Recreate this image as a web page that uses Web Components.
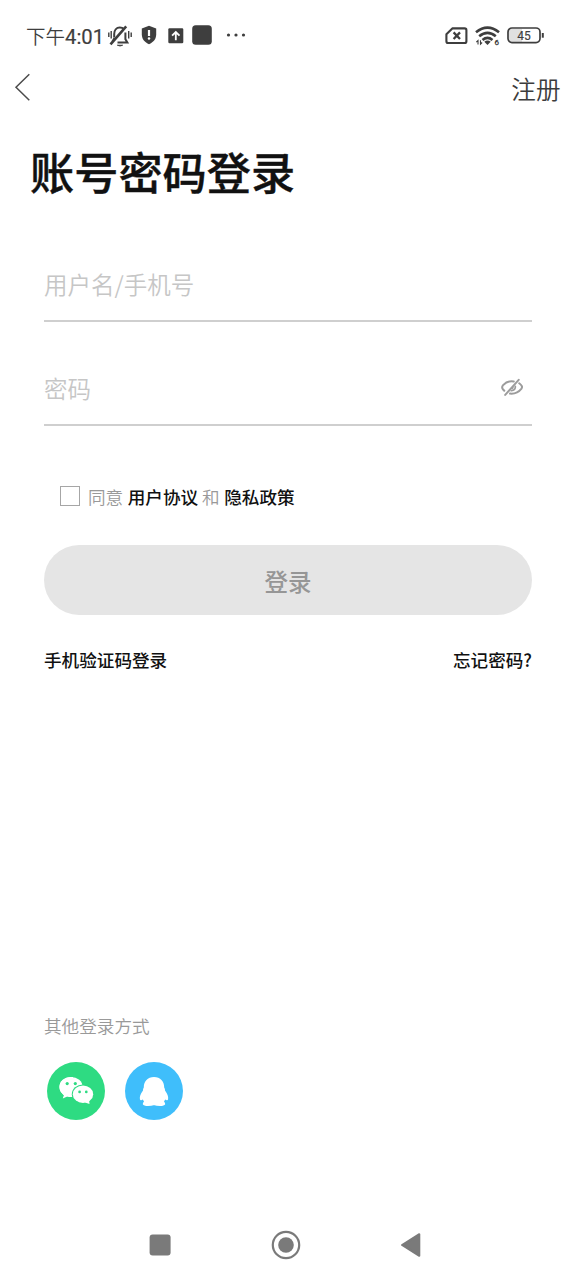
<!DOCTYPE html>
<html lang="zh-CN">
<head>
<meta charset="utf-8">
<title>账号密码登录</title>
<style>
html,body{margin:0;height:100%;background:#fff}
body{font-family:Roboto,"Noto Sans CJK SC",sans-serif}
</style>
</head>
<body>
<login-page></login-page>
<script>
const define = (name, html) => customElements.define(name, class extends HTMLElement {
  constructor() {
    super();
    const t = document.createElement('template');
    t.innerHTML = html;
    this.attachShadow({ mode: 'open' }).append(t.content.cloneNode(true));
  }
});

define('status-bar', `
<style>
:host{display:flex;box-sizing:border-box;height:70px;align-items:center;padding:0 31px 0 26px;color:#3e3e3e}
svg{display:block;flex:none}
.time{font-size:19.5px;line-height:28px;white-space:nowrap;width:81px;margin-top:4px;font-family:Roboto,"Noto Sans CJK SC",sans-serif}
.time b{font-weight:400;font-size:20.3px;-webkit-text-stroke:.2px currentColor}
.cjk{font-weight:350}
.gap{flex:1}
text{font-family:Roboto,sans-serif;font-weight:400}
</style>
<div class="time"><span class="cjk">下午</span><b>4:01</b></div>
<svg width="26" height="24" viewBox="0 0 26 24" fill="none" stroke="#3e3e3e" stroke-width="2" style="margin-top:1px">
<path d="M7.2 13.5V10C7.2 6.2 9.4 3.4 12.8 3.4C14.8 3.4 16 4 16.8 4.9M18.4 8.5V15.2L20.4 18.6H10.5"/><path d="M5.3 17.8L7.5 14"/><path d="M3.5 20.3L19.2 2.3" stroke-width="2.6"/><path d="M10.3 21.2H15.7Q13 22.9 10.3 21.2Z" fill="#3e3e3e" stroke-width=".8"/><path d="M1.8 8.5V13M4.2 7V14.5M21.7 7V14.5M24.2 8.5V13" stroke-width="1.4"/></svg>
<svg width="16" height="20" viewBox="0 0 16 20" style="margin-left:8px"><path d="M8 .8L15.2 3.4V9.3C15.2 14.3 12.1 17.5 8 19.2C3.9 17.5.8 14.3.8 9.3V3.4Z" fill="#3e3e3e"/><path d="M8 5V11" stroke="#fff" stroke-width="2.2"/><circle cx="8" cy="13.6" r="1.25" fill="#fff"/></svg>
<svg width="16" height="16" viewBox="0 0 16 16" style="margin-left:11px;margin-top:1px"><rect x=".3" y=".3" width="15" height="15" rx="1.2" fill="#3e3e3e"/><path d="M7.8 12.3V4M4.1 7.7L7.8 4L11.5 7.7" fill="none" stroke="#fff" stroke-width="1.8"/></svg>
<svg width="20" height="20" viewBox="0 0 20 20" style="margin-left:8px"><rect x=".2" y=".2" width="19.6" height="19.6" rx="3.5" fill="#3e3e3e"/></svg>
<svg width="20" height="4" viewBox="0 0 20 4" fill="#3e3e3e" style="margin-left:14px"><circle cx="2.5" cy="2" r="1.6"/><circle cx="10" cy="2" r="1.6"/><circle cx="17.5" cy="2" r="1.6"/></svg>
<span class="gap"></span>
<svg width="23" height="18" viewBox="0 0 23 18" fill="none" stroke="#3e3e3e" style="margin-top:2px"><path d="M7.3 1.4H19.6Q21.4 1.4 21.4 3.2V14.2Q21.4 16 19.6 16H3.2Q1.4 16 1.4 14.2V7.2Z" stroke-width="2.1" stroke-linejoin="round"/><path d="M8.6 5.4L15 12M15 5.4L8.6 12" stroke-width="2.3"/></svg>
<svg width="26" height="20" viewBox="0 0 26 20" fill="none" stroke="#3e3e3e" style="margin:1px 0 0 7px"><path d="M1 6.3Q12.5-3 24 6.3" stroke-width="2.6"/><path d="M4.2 10.2Q12.5 3.4 20.8 10.2M7.5 14Q12.5 9.8 17.5 14" stroke-width="2.6"/><path d="M9.3 15.8Q12.5 13.4 15.7 15.8L12.5 18.9Z" fill="#3e3e3e" stroke="none"/><path d="M3 18.6V14.6L1.3 16.2M5.5 14.2V18.2L7.1 16.5" stroke-width="1.1"/><text x="19.6" y="19" font-size="8" fill="#3e3e3e" stroke="#3e3e3e" stroke-width=".3">6</text></svg>
<svg width="38" height="18" viewBox="0 0 38 18" style="margin-left:6px;margin-top:1px"><path d="M5 2H15V15H5Q2 15 2 12V5Q2 2 5 2Z" fill="#e0e0e0"/><rect x="1" y="1" width="32" height="14.6" rx="4" fill="none" stroke="#3e3e3e" stroke-width="1.7"/><path d="M35.8 6V10.7" stroke="#3e3e3e" stroke-width="2"/><text x="17" y="12.6" text-anchor="middle" font-size="12" fill="#3e3e3e" stroke="#3e3e3e" stroke-width=".15">45</text></svg>`);

define('nav-header', `
<style>
:host{display:flex;box-sizing:border-box;height:34px;justify-content:space-between;align-items:center;padding:0 15.5px 0 14px;color:#3c3c3c}
svg{display:block}
span{font-size:24.6px;line-height:34px;font-weight:350;font-family:"Noto Sans CJK SC",sans-serif;padding-top:2px}
</style>
<svg width="18" height="28" viewBox="0 0 18 28" fill="none" stroke="#4c4c4c" stroke-width="1.5"><path d="M15.3 1.2L2 14.2L15.3 27.2"/></svg>
<span><slot></slot></span>`);

define('text-field', `
<style>
:host{display:flex;box-sizing:border-box;height:74px;align-items:center;justify-content:space-between;border-bottom:2px solid #cfcfcf;padding-right:8px;color:#c6c6c6;font:350 23.5px/34px "Noto Sans CJK SC",sans-serif}
</style>
<span><slot></slot></span><slot name="icon"></slot>`);

define('eye-off', `
<style>:host{display:block;margin-top:-1px}svg{display:block}</style>
<svg width="24" height="20" viewBox="0 0 24 20" fill="none" stroke="#9c9c9c" stroke-width="2" stroke-linecap="round"><path d="M13.8 3.4Q7.5 2.3 3.1 7.1Q1.2 9.3 3.1 11.5L4.3 12.8M19.2 5.3Q21.2 6.8 21.9 8.2Q22.3 9.3 21.5 10.6Q17 16.3 10 15.6M5.2 16.9L18.7 1.8"/><path d="M15.3 8.4Q15.7 12.4 11.3 12.7M12.8 9.7L12.2 10.2" stroke-width="1.8"/></svg>`);

define('agree-row', `
<style>
:host{display:flex;align-items:center;height:26px;padding-left:16px;color:#999;font:350 17.6px/26px "Noto Sans CJK SC",sans-serif}
i{box-sizing:border-box;width:20px;height:20px;border:1.4px solid #a6a6a6;margin-right:8px;position:relative;top:-1px}
b{font-weight:500;color:#111}
span{white-space:pre}
</style>
<i></i><span>同意</span><b style="margin:0 4px 0 4.5px">用户协议</b><span>和</span><b style="margin-left:4.5px">隐私政策</b>`);

define('login-button', `
<style>
:host{display:flex;height:70px;border-radius:35px;background:#e5e5e5;align-items:center;justify-content:center;color:#969696;font:500 23.5px/34px "Noto Sans CJK SC",sans-serif}
span{padding-top:2px}
</style><span><slot></slot></span>`);

define('link-row', `
<style>
:host{display:flex;justify-content:space-between;color:#111;font:500 17.6px/26px "Noto Sans CJK SC",sans-serif}
</style><slot></slot>`);

define('other-login', `
<style>
:host{display:block}
p{margin:0;color:#999;font:350 17.6px/26px "Noto Sans CJK SC",sans-serif}
div{display:flex;gap:20px;padding:23px 0 0 3px}
svg{display:block}
</style>
<p><slot></slot></p>
<div>
<svg width="58" height="58" viewBox="0 0 58 58"><circle cx="29" cy="29" r="29" fill="#2edb82"/><path d="M24 15C17.5 15 12.5 19.5 12.5 25C12.5 28.2 14.2 31 17 32.8L15.8 36.6L20.2 34.4Q23 35.3 26 35V15Z" fill="#fff"/><ellipse cx="24" cy="25" rx="11.6" ry="10.1" fill="#fff"/><ellipse cx="36" cy="32.2" rx="11.2" ry="9.7" fill="#2edb82"/><ellipse cx="36" cy="32.2" rx="10.2" ry="8.7" fill="#fff"/><path d="M38 40.4L42.5 42L42 37Z" fill="#fff"/><g fill="#2edb82"><circle cx="20.2" cy="21.6" r="1.6"/><circle cx="28.3" cy="21.6" r="1.6"/><circle cx="32.6" cy="29.9" r="1.35"/><circle cx="39.3" cy="29.9" r="1.35"/></g></svg>
<svg width="58" height="58" viewBox="0 0 58 58"><circle cx="29" cy="29" r="29" fill="#3fbefb"/><path d="M29 15C22.6 15 18.8 19.3 18.8 25.4Q17.8 26.8 18 28.4C15.4 31.7 14.5 34.5 14.9 37.2Q15.4 38.9 16.8 37.9L17.8 37.4L19 39.4Q17.6 40.8 17.8 42.2Q18.7 44 23 44Q27 44 28.4 43.2H29.6Q31 44 35 44Q39.3 44 40.2 42.2Q40.4 40.8 39 39.4L40.2 37.4L41.2 37.9Q42.6 38.9 43.1 37.2C43.5 34.5 42.6 31.7 40 28.4Q40.2 26.8 39.2 25.4C39.2 19.3 35.4 15 29 15Z" fill="#fff"/></svg>
</div>`);

define('system-nav', `
<style>
:host{display:flex;align-items:center;height:30px;padding-left:149px}
svg{display:block}
</style>
<svg width="22" height="22" viewBox="0 0 22 22"><rect x=".6" y=".6" width="21" height="21" rx="3" fill="#7a7a7a"/></svg>
<svg width="30" height="30" viewBox="0 0 30 30" style="margin-left:100px"><circle cx="15" cy="15" r="13.2" fill="none" stroke="#7a7a7a" stroke-width="2.2"/><circle cx="15" cy="15" r="7.8" fill="#7a7a7a"/></svg>
<svg width="22" height="26" viewBox="0 0 22 26" style="margin-left:99px"><path d="M2 13L19.3 2.2V23.8Z" fill="#7a7a7a" stroke="#7a7a7a" stroke-width="2" stroke-linejoin="round"/></svg>`);

define('login-page', `
<style>
:host{display:flex;flex-direction:column;box-sizing:border-box;height:1280px;padding-bottom:20px;overflow:hidden}
h1{margin:37px 0 0 30px;font:500 44.2px/60px "Noto Sans CJK SC",sans-serif;color:#111;height:60px;-webkit-text-stroke:.4px #111}
main{display:flex;flex-direction:column;padding:47px 44px 0}
text-field+text-field{margin-top:30px}
agree-row{margin-top:58px}
login-button{margin-top:35px}
link-row{margin-top:32px}
other-login{margin-top:340px}
system-nav{margin-top:auto}
</style>
<status-bar></status-bar>
<nav-header>注册</nav-header>
<h1>账号密码登录</h1>
<main>
<text-field>用户名/手机号</text-field>
<text-field>密码<eye-off slot="icon"></eye-off></text-field>
<agree-row></agree-row>
<login-button>登录</login-button>
<link-row><span>手机验证码登录</span><span>忘记密码?</span></link-row>
<other-login>其他登录方式</other-login>
</main>
<system-nav></system-nav>`);
</script>
</body>
</html>
